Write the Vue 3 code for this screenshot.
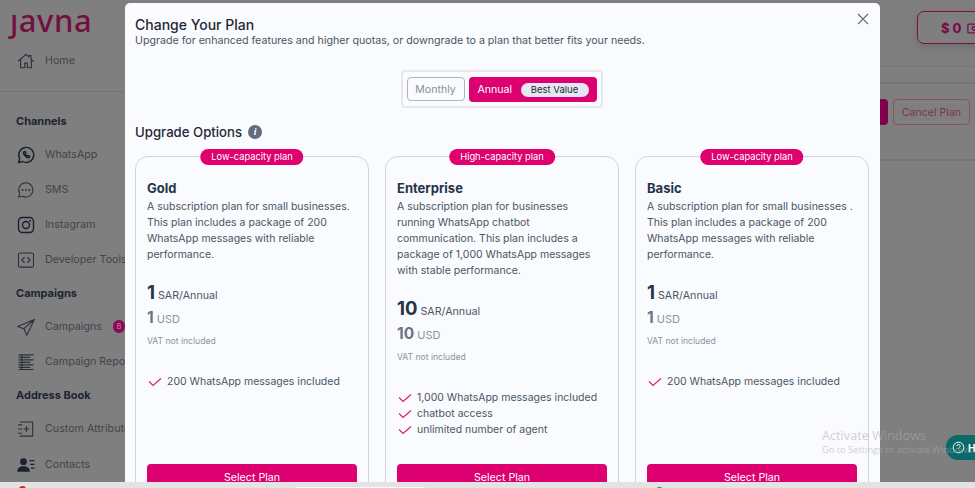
<script setup>
const plans = [
  { name: 'Gold', tag: 'Low-capacity plan', desc: 'A subscription plan for small businesses. This plan includes a package of 200 WhatsApp messages with reliable performance.', price: 1, feats: ['200 WhatsApp messages included'] },
  { name: 'Enterprise', tag: 'High-capacity plan', desc: 'A subscription plan for businesses running WhatsApp chatbot communication. This plan includes a package of 1,000 WhatsApp messages with stable performance.', price: 10, feats: ['1,000 WhatsApp messages included', 'chatbot access', 'unlimited number of agent'] },
  { name: 'Basic', tag: 'Low-capacity plan', desc: 'A subscription plan for small businesses . This plan includes a package of 200 WhatsApp messages with reliable performance.', price: 1, feats: ['200 WhatsApp messages included'] },
]
</script>

<template>
  <div class="screen">
    <div class="page">
      <aside class="sidebar">
        <div class="logo">ȷavna</div>
        <a class="item home">
          <svg viewBox="0 0 24 24" class="ic"><path d="M3 12 12 4l3.500 3V5.500h2.500V10l3 2.500M5.500 10.500V20h5v-5.500h3V20h5v-9.500" /></svg>
          Home
        </a>
        <hr class="divider" />
        <h4 class="head first">Channels</h4>
        <a class="item">
          <svg viewBox="0 0 24 24" class="ic thick"><path d="M3 21l1.400-4.800A9 9 0 1 1 8 19.800L3 21z" /><path d="M9 8.500c-.8 2.500 3.800 7.500 6.800 6.700l.7-1.700-2.200-1.100-1 .9c-1-.5-1.800-1.400-2.300-2.400l.9-1-1-2.200-1.900.8z" /></svg>
          WhatsApp
        </a>
        <a class="item">
          <svg viewBox="0 0 24 24" class="ic"><path d="M3 20.500l1.500-4.200A8.500 8.500 0 1 1 8 19.500L3 20.500z" /><path class="dots" d="M8 12h.01M12 12h.01M16 12h.01" /></svg>
          SMS
        </a>
        <a class="item">
          <svg viewBox="0 0 24 24" class="ic thick"><rect x="3" y="3" width="18" height="18" rx="4.500" /><circle cx="12" cy="12" r="4.200" /><path class="dots" d="M17 7h.01" /></svg>
          Instagram
        </a>
        <a class="item">
          <svg viewBox="0 0 24 24" class="ic"><rect x="3" y="3.500" width="18" height="17" rx="2" /><path d="M10 9l-3 3 3 3M14 9l3 3-3 3" /></svg>
          Developer Tools
        </a>
        <h4 class="head second">Campaigns</h4>
        <a class="item">
          <svg viewBox="0 0 24 24" class="ic"><path d="M22 3 2 11.500l7.500 2.500L13 22 22 3zM9.500 14 22 3" /></svg>
          Campaigns
          <span class="badge">B</span>
        </a>
        <a class="item">
          <svg viewBox="0 0 24 24" class="ic report"><path d="M3 3.500h18M3 6.500h14M3 9.500h18M3 12.500h14M3 15.500h18M3 18.500h14M3 21h18M7 3v18" /></svg>
          Campaign Reports
        </a>
        <h4 class="head third">Address Book</h4>
        <a class="item tall">
          <svg viewBox="0 0 24 24" class="ic"><path d="M5 3.500h15v17H5M3 7h4M3 12h4M3 17h4M12.500 9v6M9.500 12h6" /></svg>
          Custom Attributes
        </a>
        <a class="item">
          <svg viewBox="0 0 24 24" class="ic filled"><circle cx="9" cy="8" r="4" /><path d="M1.500 20c0-4.500 3-6.500 7.500-6.500s7.500 2 7.500 6.500z" /><path d="M16 6h6v1.500h-6zM17 10.500h5V12h-5zM18 15h4v1.500h-4z" /></svg>
          Contacts
        </a>
      </aside>
      <main class="content">
        <div class="topbar">
          <div class="balance">
            $ 0
            <svg viewBox="0 0 16 12" class="cash"><rect x="1" y="1" width="16" height="10" rx="1" /><circle cx="8" cy="6" r="2" /></svg>
          </div>
        </div>
        <div class="rule"></div>
        <div class="actions">
          <button class="renew"></button>
          <button class="cancel">Cancel Plan</button>
        </div>
        <div class="rule-low"></div>
      </main>
    </div>
    <div class="taskbar">
      <span class="dot red"></span>
      <span class="tab"></span>
      <span class="dot green"></span>
    </div>

    <section class="modal">
      <svg viewBox="0 0 14 14" class="close"><path d="M2 2l10 10M12 2 2 12" /></svg>
      <h2 class="title">Change Your Plan</h2>
      <p class="sub">Upgrade for enhanced features and higher quotas, or downgrade to a plan that better fits your needs.</p>
      <div class="toggle-row">
        <div class="toggle">
          <button class="monthly">Monthly</button>
          <button class="annual">Annual <span class="best">Best Value</span></button>
        </div>
      </div>
      <h3 class="upgrade">
        Upgrade Options
        <span class="info">i</span>
      </h3>
      <div class="cards">
        <article v-for="p in plans" :key="p.name" class="card">
          <span class="tag">{{ p.tag }}</span>
          <h4 class="name">{{ p.name }}</h4>
          <p class="desc">{{ p.desc }}</p>
          <div class="price"><b>{{ p.price }}</b> SAR/Annual</div>
          <div class="usd"><b>{{ p.price }}</b> USD</div>
          <div class="vat">VAT not included</div>
          <ul class="feats">
            <li v-for="f in p.feats" :key="f">
              <svg viewBox="0 0 14 10" class="check"><path d="M1 4.500 5 8.500 13 1.500" /></svg>
              {{ f }}
            </li>
          </ul>
          <button class="select">Select Plan</button>
        </article>
      </div>
    </section>

    <div class="help">
      <svg viewBox="0 0 16 16" class="help-ic"><circle cx="8" cy="8" r="6.500" /><path d="M6 6.300a2 2 0 1 1 3 1.700c-.7.400-1 .8-1 1.500M8 11.600v.4" /></svg>
      <b>Help</b>
    </div>
    <div class="watermark">
      <div class="wm1">Activate Windows</div>
      <div class="wm2">Go to Settings to activate Windows.</div>
    </div>
  </div>
</template>

<style>
html, body { margin: 0; padding: 0; }
</style>

<style scoped>
* { box-sizing: border-box; }
.screen {
  position: relative;
  width: 975px;
  height: 488px;
  overflow: hidden;
  font-family: Inter, "Liberation Sans", sans-serif;
  background: #7f7f80;
}
.page { display: flex; height: 482px; overflow: hidden; }
.sidebar { width: 125px; flex: none; white-space: nowrap; overflow: hidden; }
.logo {
  font-family: "Noto Sans", sans-serif;
  font-size: 31px;
  line-height: 24px;
  height: 38px;
  padding: 8px 0 0 10px;
  letter-spacing: .5px;
  color: #74103f;
  font-weight: 500;
}
.item {
  display: flex;
  align-items: center;
  gap: 9px;
  height: 35px;
  padding-left: 16px;
  font-size: 10.700px;
  color: #3f444c;
}
.item.tall { height: 37px; }
.home { margin-top: 5px; }
.ic {
  width: 20px;
  height: 20px;
  flex: none;
  fill: none;
  stroke: #2a303a;
  stroke-width: 1.300;
  stroke-linejoin: round;
  stroke-linecap: round;
}
.ic.thick { stroke-width: 1.700; stroke: #1a2230; }
.ic.report { stroke-width: 1.400; stroke-linecap: butt; }
.ic.filled { fill: #1a2230; stroke: none; }
.dots { stroke-width: 2.200; }
.divider { border: 0; border-top: 1px solid #737374; margin: 13px 0 0; }
.head {
  margin: 0;
  height: 31px;
  display: flex;
  align-items: center;
  padding-left: 16px;
  font-size: 11px;
  font-weight: 700;
  color: #1c2530;
}
.head.first { margin-top: 13px; height: 32px; }
.head.second { height: 32px; padding-bottom: 1px; }
.badge {
  width: 20px;
  height: 13px;
  border-radius: 7px;
  background: #8a0a55;
  color: #c08aa8;
  font-size: 7px;
  line-height: 13px;
  text-align: center;
  margin-left: 2px;
}
.content { flex: 1; min-width: 0; }
.topbar { height: 67px; padding: 11px 0 0 792px; border-bottom: 1px solid #767677; }
.balance {
  display: flex;
  align-items: center;
  gap: 6px;
  width: 70px;
  height: 33px;
  padding-left: 23px;
  border: 1.500px solid #7c0d48;
  border-radius: 7px;
  font-size: 13px;
  font-weight: 800;
  color: #7c0d48;
  white-space: nowrap;
  box-shadow: 0 3px 8px rgba(0,0,0,.15);
}
.cash { width: 14px; height: 11px; flex: none; fill: none; stroke: #7c0d48; stroke-width: 1.500; margin-top: 2px; overflow: visible; }
.rule { height: 17px; border-bottom: 2px solid #757576; }
.actions { display: flex; gap: 5px; padding: 15px 0 0 735px; }
.renew { width: 28px; height: 26px; border: 0; border-radius: 4px; background: #83004c; }
.cancel {
  width: 77px;
  height: 26px;
  border: 1px solid #8f5060;
  border-radius: 4px;
  background: transparent;
  color: #7f3348;
  font: 400 10.600px Inter, sans-serif;
  padding: 0;
}
.rule-low { height: 2px; margin-top: 34px; background: #757576; }
.taskbar { height: 6px; background: #e3e3e3; position: relative; }
.dot { position: absolute; top: 4px; width: 7px; height: 7px; border-radius: 50%; }
.red { left: 19px; background: #d0201c; }
.green { left: 656px; top: 5px; background: #1c9a3c; }
.tab { position: absolute; left: 295px; top: 5px; width: 130px; height: 1px; background: #fafafa; }

.modal {
  position: absolute;
  left: 125px;
  top: 3px;
  width: 755px;
  height: 479px;
  overflow: hidden;
  background: #fafbfe;
  border-radius: 5px 5px 0 0;
  padding: 14px 10px 0;
  color: #1f2937;
}
.close {
  position: absolute;
  right: 10px;
  top: 9px;
  width: 14px;
  height: 14px;
  fill: none;
  stroke: #6b7280;
  stroke-width: 1.300;
}
.title { margin: 0; font-size: 14px; line-height: 16px; font-weight: 500; color: #1f2937; }
.sub { margin: 0; font-size: 10.650px; line-height: 15px; color: #4b5563; white-space: nowrap; }
.toggle-row { display: flex; justify-content: center; padding-top: 22px; margin-left: -2px; }
.toggle {
  display: flex;
  gap: 4px;
  height: 38px;
  padding: 5px 4px;
  border: 2px solid #e6e8ee;
  border-radius: 4px;
}
.toggle button { font-family: inherit; font-size: 10.600px; padding: 0; border-radius: 4px; }
.monthly { width: 58px; height: 24px; border: 1px solid #b0b4bc; background: transparent; color: #8a8f98; }
.annual {
  display: flex;
  align-items: center;
  width: 128px;
  height: 25px;
  border: 0;
  background: #dd0070;
  color: #fff;
  padding-left: 9px !important;
}
.best {
  width: 68px;
  height: 14px;
  margin-left: auto;
  margin-right: 8px;
  border-radius: 7px;
  background: #e4e8f0;
  color: #1f2937;
  font-size: 9.500px;
  line-height: 14px;
  text-align: center;
}
.upgrade {
  display: flex;
  align-items: center;
  gap: 6px;
  margin: 15px 0 0;
  font-size: 13.200px;
  line-height: 18px;
  font-weight: 500;
  color: #1f2937;
}
.info {
  width: 14px;
  height: 14px;
  border-radius: 50%;
  background: #5f6b7e;
  color: #fff;
  font: italic 700 10px/14px "Liberation Serif", serif;
  text-align: center;
}
.cards { display: flex; gap: 16px; margin-top: 15px; }
.card {
  position: relative;
  width: 234px;
  height: 340px;
  padding: 23px 11px 0;
  border: 1.500px solid #d0d3d9;
  border-radius: 13px;
}
.tag {
  position: absolute;
  top: -8px;
  left: 50%;
  transform: translateX(-50%);
  height: 16px;
  padding: 0 11px;
  border-radius: 8px;
  background: #e0006e;
  color: #fff;
  font-size: 9.300px;
  line-height: 16px;
  white-space: nowrap;
}
.name { margin: 0; font-size: 13px; line-height: 16px; font-weight: 700; color: #263448; }
.desc { margin: 3px 0 0; font-size: 10.500px; line-height: 16px; color: #4b5563; }
.price { margin-top: 16px; font-size: 10.700px; line-height: 26px; color: #4b5563; }
.price b { font-size: 18.500px; font-weight: 700; color: #263448; }
.usd { margin-top: -3px; font-size: 11px; line-height: 24px; color: #8b93a0; }
.usd b { font-size: 15.500px; font-weight: 700; color: #6b7482; }
.vat { margin-top: 2px; font-size: 8.600px; line-height: 16px; color: #8b93a0; }
.feats { list-style: none; margin: 25px 0 0; padding: 0; font-size: 10.500px; line-height: 16px; color: #4b5563; }
.feats li { display: flex; align-items: center; gap: 5px; white-space: nowrap; }
.check { width: 14px; height: 10px; flex: none; margin-left: 1px; fill: none; stroke: #e0187a; stroke-width: 1.100; }
.select {
  position: absolute;
  left: 11px;
  right: 11px;
  top: 307px;
  height: 32px;
  border: 0;
  border-radius: 4px;
  background: #dd0070;
  color: #fff;
  font: 400 10.700px/26px Inter, sans-serif;
  text-align: center;
  padding: 0 0 4px;
}
.watermark { position: absolute; left: 822px; top: 427px; color: rgba(172,172,172,.58); white-space: nowrap; font-family: "Open Sans", sans-serif; }
.wm1 { font-size: 12.700px; line-height: 16px; }
.wm2 { font-size: 9.300px; line-height: 14px; }
.help {
  position: absolute;
  left: 946px;
  top: 435px;
  width: 60px;
  height: 25px;
  padding-left: 6px;
  display: flex;
  align-items: center;
  gap: 3px;
  border-radius: 12px;
  background: #0a6a6a;
  color: #fff;
  font-size: 10px;
}
.help-ic { width: 13px; height: 13px; flex: none; fill: none; stroke: #fff; stroke-width: 1.200; }
</style>
